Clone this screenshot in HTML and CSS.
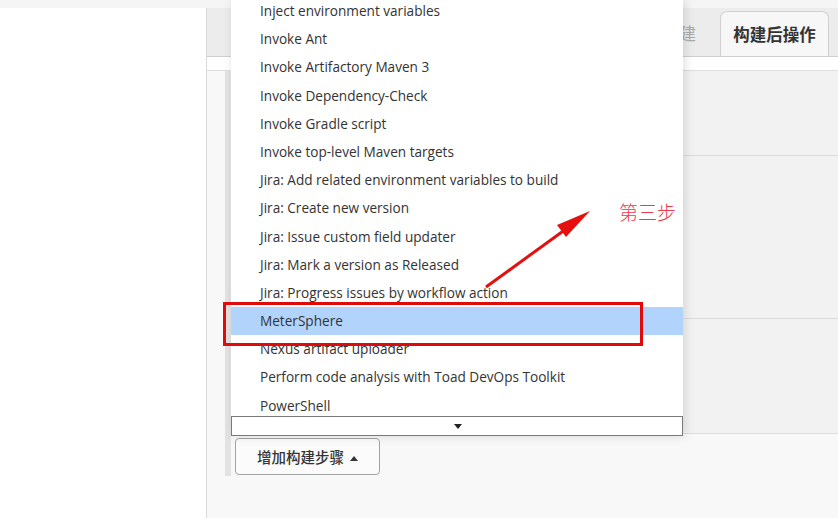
FILE: index.html
```html
<!DOCTYPE html>
<html lang="zh-CN">
<head>
  <meta charset="UTF-8" />
  <title>构建后操作</title>
  <link rel="stylesheet" href="styles.css">
</head>
<body>
<div class="sidebar"></div>
<div class="main">
  <div class="tabbar">
    <span class="tab">构建</span>
    <span class="tab active">构建后操作</span>
  </div>
  <div class="tab-gap"></div>
  <div class="steps">
    <div class="block b1"></div>
    <div class="block b2"></div>
    <div class="block b3"></div>
    <div class="btn-row">
      <button class="add-btn">增加构建步骤 <span class="up"></span></button>
    </div>
  </div>
</div>

<!-- dropdown menu opened from the button -->
<div class="menu">
  <ul class="menu-list">
    <li>Inject environment variables</li>
    <li>Invoke Ant</li>
    <li>Invoke Artifactory Maven 3</li>
    <li>Invoke Dependency-Check</li>
    <li>Invoke Gradle script</li>
    <li>Invoke top-level Maven targets</li>
    <li>Jira: Add related environment variables to build</li>
    <li>Jira: Create new version</li>
    <li>Jira: Issue custom field updater</li>
    <li>Jira: Mark a version as Released</li>
    <li>Jira: Progress issues by workflow action</li>
    <li class="selected">MeterSphere</li>
    <li>Nexus artifact uploader</li>
    <li>Perform code analysis with Toad DevOps Toolkit</li>
    <li>PowerShell</li>
  </ul>
  <div class="menu-scroll"><span class="down"></span></div>
</div>

<!-- annotation -->
<div class="mark-box"></div>
<svg class="mark-arrow" width="838" height="518" viewBox="0 0 838 518">
  <line x1="486" y1="287" x2="566" y2="229" stroke="#e60f0f" stroke-width="3" />
  <polygon points="590,211 557,225 566,237" fill="#e60f0f" />
</svg>
<div class="mark-text">第三步</div>
</body>
</html>
```
FILE: styles.css
```css
* { margin: 0; padding: 0; box-sizing: border-box; }

html, body {
  height: 100%;
  overflow: hidden;
}

body {
  background: #f5f5f5;
  padding-top: 8px;
  display: flex;
  font-family: "Open Sans", "Noto Sans CJK SC", sans-serif;
  color: #333;
}

.sidebar {
  width: 207px;
  background: #fff;
  border-right: 1px solid #dadada;
}

.main {
  flex: 1;
  display: flex;
  flex-direction: column;
  background: #f8f8f8;
}

.tabbar {
  height: 49px;
  background: #ececec;
  border-bottom: 1px solid #cfcfcf;
  display: flex;
  align-items: flex-end;
  justify-content: flex-end;
  gap: 12px;
  padding-right: 9px;
}

.tab {
  font-family: "Noto Sans CJK SC", sans-serif;
  font-size: 16.5px;
  color: #aaa;
  padding: 0 12px;
  height: 45px;
  line-height: 44px;
}

.tab.active {
  width: 109px;
  text-align: center;
  padding: 0;
  font-weight: bold;
  color: #333;
  background: #f7f7f7;
  border: 1px solid #d0d0d0;
  border-bottom: none;
  border-radius: 7px 7px 0 0;
}

.tab-gap {
  height: 14px;
  background: #fff;
  border-bottom: 1px solid #dedede;
}

.steps {
  margin-left: 18px;
  border-left: 6px solid #e3e3e3;
}

.block {
  background: #f2f2f2;
  border-bottom: 1px solid #dcdcdc;
}
.b1 { height: 85px; }
.b2 { height: 163px; }
.b3 { height: 115px; }

.btn-row {
  background: #f8f8f8;
  padding: 4px 0 1px 4px;
}

.add-btn {
  width: 145px;
  height: 37px;
  text-align: left;
  padding-left: 21px;
  background: #fbfbfb;
  border: 1px solid #a3a3a3;
  border-radius: 4px;
  font-family: "Noto Sans CJK SC", sans-serif;
  font-size: 14.5px;
  font-weight: 500;
  color: #333;
}

.up {
  display: inline-block;
  vertical-align: 2px;
  margin-left: 3px;
  border-left: 4px solid transparent;
  border-right: 4px solid transparent;
  border-bottom: 5px solid #333;
}

/* dropdown */
.menu {
  position: absolute;
  left: 231px;
  top: 0;
  width: 452px;
  background: #fff;
  box-shadow: 2px 0 10px rgba(0, 0, 0, 0.13);
}

.menu-list {
  list-style: none;
  height: 416px;
  overflow: hidden;
}

.menu-list li {
  height: 28.2px;
  line-height: 28.2px;
  padding-left: 29px;
  font-size: 13.6px;
  color: #333;
  white-space: nowrap;
}

.menu-list li:first-child {
  margin-top: -3px;
}

.menu-list li.selected {
  background: #b2d3fb;
}

.menu-scroll {
  height: 20px;
  border: 1px solid #7a7a7a;
  background: #fff;
  display: flex;
  justify-content: center;
  align-items: center;
}

.down {
  display: block;
  margin-left: 2px;
  border-left: 4px solid transparent;
  border-right: 4px solid transparent;
  border-top: 5px solid #222;
}

/* annotation */
.mark-box {
  position: absolute;
  left: 223px;
  top: 302px;
  width: 420px;
  height: 44px;
  border: 3px solid #e00a0a;
}

.mark-arrow {
  position: absolute;
  left: 0;
  top: 0;
}

.mark-text {
  position: absolute;
  left: 619px;
  top: 198px;
  font-family: "Noto Sans CJK SC", sans-serif;
  font-weight: 300;
  font-size: 19px;
  color: #ec3a4a;
}
```
